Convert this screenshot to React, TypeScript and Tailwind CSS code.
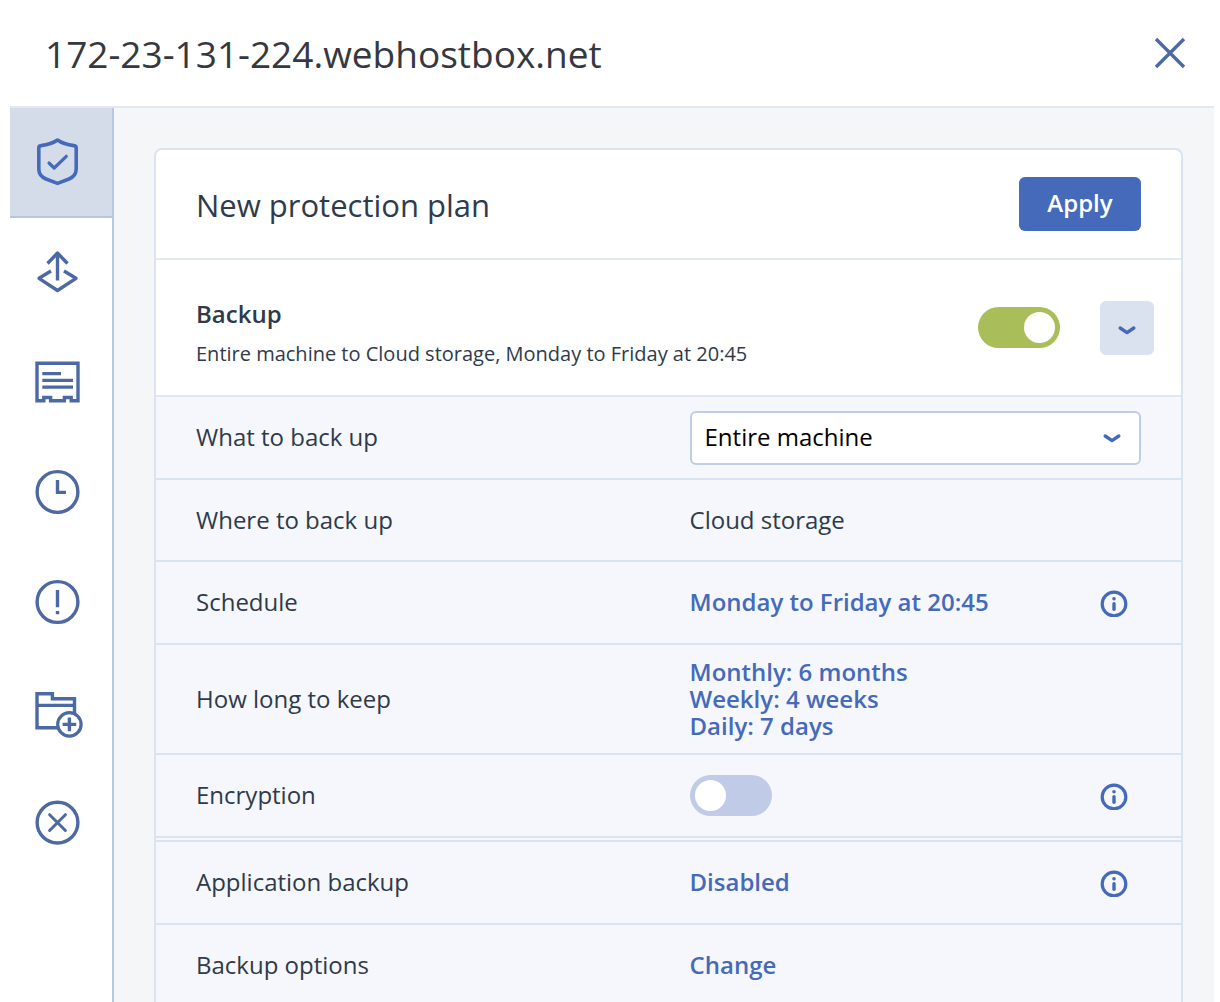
import React, { useState } from "react";

type IconProps = { children: React.ReactNode };

function NavIcon({ children }: IconProps) {
  return (
    <svg
      viewBox="0 0 52 52"
      className="size-[52px]"
      fill="none"
      stroke="currentColor"
      strokeWidth="3.4"
      aria-hidden="true"
    >
      {children}
    </svg>
  );
}

const navItems = [
  {
    label: "Protection",
    icon: (
      <>
        <path
          strokeLinejoin="round"
          strokeWidth="3.6"
          d="M24.5 4C19 8 13 9 8 9.6Q5.8 9.8 5.8 12V33C5.8 38 9 41.3 13 43L24.5 47.4L36 43C40 41.3 43.2 38 43.2 33V12Q43.2 9.8 41 9.6C36 9 30 8 24.5 4Z"
        />
        <path strokeLinecap="round" strokeLinejoin="round" strokeWidth="3.2" d="M16 27L21.2 32L33.3 20.3" />
      </>
    ),
  },
  {
    label: "Recovery",
    icon: (
      <g strokeLinejoin="round">
        <path d="M24.5 34.5V8M14.5 17.5L24.5 7L34.5 17.5" />
        <path d="M18 25L6 32.3L24.5 44.5L43 32.3L31 25" />
      </g>
    ),
  },
  {
    label: "Details",
    icon: (
      <>
        <path d="M4 7.2H45V44.7H38.2V41.5H31.4V44.7H17.6V41.5H10.8V44.7H4Z" />
        <path strokeWidth="3.2" d="M9.3 17.6H28M9.3 24.4H40M9.3 31.2H40" />
      </>
    ),
  },
  {
    label: "Activities",
    icon: (
      <>
        <circle cx="24.5" cy="26" r="20.4" />
        <path d="M24.5 14V26.4H33" />
      </>
    ),
  },
  {
    label: "Alerts",
    icon: (
      <>
        <circle cx="24.5" cy="26" r="20.4" />
        <path d="M24.5 14V31.3M24.5 35V38.2" />
      </>
    ),
  },
  {
    label: "Add to group",
    icon: (
      <>
        <path d="M24.5 41.7H4V7.7H19.4V12.8H41.5V27M4 19.4H41.5" />
        <circle cx="36.4" cy="38.4" r="11.7" strokeWidth="3.2" />
        <path d="M36.4 31.6V45.2M29.6 38.4H43.2" />
      </>
    ),
  },
  {
    label: "Delete",
    icon: (
      <>
        <circle cx="24.5" cy="26.6" r="20.4" />
        <path strokeWidth="3" strokeLinecap="round" d="M16.6 18.7L32.4 34.5M32.4 18.7L16.6 34.5" />
      </>
    ),
  },
];

function Chevron({ className }: { className?: string }) {
  return (
    <svg
      viewBox="0 0 20 12"
      className={`h-3 w-5 text-[#466aba] ${className ?? ""}`}
      fill="none"
      stroke="currentColor"
      strokeWidth="3.4"
      strokeLinecap="round"
      strokeLinejoin="round"
      aria-hidden="true"
    >
      <path d="M3.2 4L10 8.6L16.8 4" />
    </svg>
  );
}

function Toggle({ label, initial }: { label: string; initial: boolean }) {
  const [on, setOn] = useState(initial);
  return (
    <label className="relative block h-[41px] w-[82px] shrink-0 cursor-pointer">
      <input
        type="checkbox"
        role="switch"
        aria-label={label}
        checked={on}
        onChange={() => setOn(!on)}
        className="peer block size-full cursor-pointer appearance-none rounded-full bg-[#c0cbe8] checked:bg-[#a9be58]"
      />
      <span className="pointer-events-none absolute top-[5px] left-[5px] size-[31px] rounded-full bg-white peer-checked:left-[46px]" />
    </label>
  );
}

function InfoButton({ label }: { label: string }) {
  return (
    <button type="button" aria-label={label} className="mr-[13px] ml-auto shrink-0 cursor-pointer text-[#466aba]">
      <svg viewBox="0 0 28 28" className="block size-7" fill="none" stroke="currentColor" aria-hidden="true">
        <circle cx="14" cy="15" r="11.8" strokeWidth="3.2" />
        <circle cx="14" cy="9.8" r="1.8" fill="currentColor" stroke="none" />
        <path d="M14 14.8V20.2" strokeWidth="3.4" strokeLinecap="round" />
      </svg>
    </button>
  );
}

function Row({ label, children, className }: { label: string; children: React.ReactNode; className: string }) {
  return (
    <div
      className={`grid shrink-0 grid-cols-[493fr_451fr] items-center border-[#dae3f2] bg-[#f5f7fc] pr-10 pl-10 ${className}`}
    >
      <span className="pb-px">{label}</span>
      <div className="flex items-center">{children}</div>
    </div>
  );
}

const valueButton = "cursor-pointer pb-0.5 text-left leading-[27px] font-semibold text-[#466aba]";

export default function App() {
  const [what, setWhat] = useState("Entire machine");
  return (
    <div className="flex h-screen flex-col overflow-hidden bg-white pr-1.5 pl-2.5 font-['Open_Sans','Noto_Sans',sans-serif] text-2xl text-[#2f3a4b]">
      <header className="flex h-[108px] shrink-0 items-center justify-between border-b-2 border-[#e2e8f4] pr-7 pl-[35px]">
        <h1 className="pt-0.5 text-[37px] leading-[52px] text-[#36383f]">172-23-131-224.webhostbox.net</h1>
        <button type="button" aria-label="Close" className="cursor-pointer text-[#4d69a3]">
          <svg viewBox="0 0 32 32" className="block size-8" fill="none" stroke="currentColor" strokeWidth="3.4" aria-hidden="true">
            <path d="M2 2L30 30M30 2L2 30" />
          </svg>
        </button>
      </header>

      <div className="flex min-h-0 flex-1">
        <nav aria-label="Machine" className="flex w-[104px] shrink-0 flex-col border-r-2 border-[#bac7e2]">
          {navItems.map((item, i) => (
            <button
              key={item.label}
              type="button"
              aria-label={item.label}
              className={
                i === 0
                  ? "flex h-[110px] shrink-0 cursor-pointer items-center border-b-2 border-[#b9c5de] bg-[#d5dce9] pl-[23px] text-[#466aba]"
                  : "flex h-[110px] shrink-0 cursor-pointer items-center border-b-2 border-transparent pl-[23px] text-[#4d69a3]"
              }
            >
              <NavIcon>{item.icon}</NavIcon>
            </button>
          ))}
        </nav>

        <main className="min-w-0 flex-1 overflow-hidden bg-[#f4f6f8] pt-10 pr-[31px] pl-10">
          <section className="flex flex-col overflow-hidden rounded-lg border-2 border-[#dae3f0] bg-white">
            <div className="flex h-[110px] shrink-0 items-center justify-between border-b-2 border-[#e2e8f4] pr-10 pl-10">
              <h2 className="pt-0.5 text-[31px] leading-10">New protection plan</h2>
              <button
                type="button"
                className="h-[54px] w-[122px] cursor-pointer rounded-md bg-[#466aba] pb-0.5 font-semibold text-white"
              >
                Apply
              </button>
            </div>

            <div className="flex h-[137px] shrink-0 items-center border-b-2 border-[#dfe7f5] pr-[27px] pl-10">
              <div className="min-w-0 flex-1 pt-3">
                <h3 className="leading-10 font-semibold">Backup</h3>
                <p className="text-xl leading-10">Entire machine to Cloud storage, Monday to Friday at 20:45</p>
              </div>
              <Toggle label="Backup" initial={true} />
              <button
                type="button"
                aria-label="Collapse backup settings"
                className="ml-10 flex size-[54px] shrink-0 cursor-pointer items-center justify-center rounded-md bg-[#dae1ef]"
              >
                <Chevron className="mt-1" />
              </button>
            </div>

            <Row label="What to back up" className="h-[83px] border-b-2">
              <div className="relative w-full">
                <select
                  aria-label="What to back up"
                  value={what}
                  onChange={(e) => setWhat(e.target.value)}
                  className="block h-[54px] w-full cursor-pointer appearance-none rounded-md border-2 border-[#c0cde9] bg-white pr-12 pb-0.5 pl-[13px] text-black"
                >
                  <option>Entire machine</option>
                  <option>Disks/volumes</option>
                  <option>Files/folders</option>
                </select>
                <Chevron className="pointer-events-none absolute top-[21px] right-[19px]" />
              </div>
            </Row>
            <Row label="Where to back up" className="h-[82px] border-b-2">
              <span>Cloud storage</span>
            </Row>
            <Row label="Schedule" className="h-[83px] border-b-2">
              <button type="button" className={valueButton}>
                Monday to Friday at 20:45
              </button>
              <InfoButton label="About schedule" />
            </Row>
            <Row label="How long to keep" className="h-[110px] border-b-2">
              <button type="button" className={valueButton}>
                Monthly: 6 months
                <br />
                Weekly: 4 weeks
                <br />
                Daily: 7 days
              </button>
            </Row>
            <Row label="Encryption" className="h-[87px] border-b-6 border-double">
              <Toggle label="Encryption" initial={false} />
              <InfoButton label="About encryption" />
            </Row>
            <Row label="Application backup" className="h-[83px] border-b-2">
              <button type="button" className={valueButton}>
                Disabled
              </button>
              <InfoButton label="About application backup" />
            </Row>
            <Row label="Backup options" className="h-[83px] border-b-2">
              <button type="button" className={valueButton}>
                Change
              </button>
            </Row>
          </section>
        </main>
      </div>
    </div>
  );
}
